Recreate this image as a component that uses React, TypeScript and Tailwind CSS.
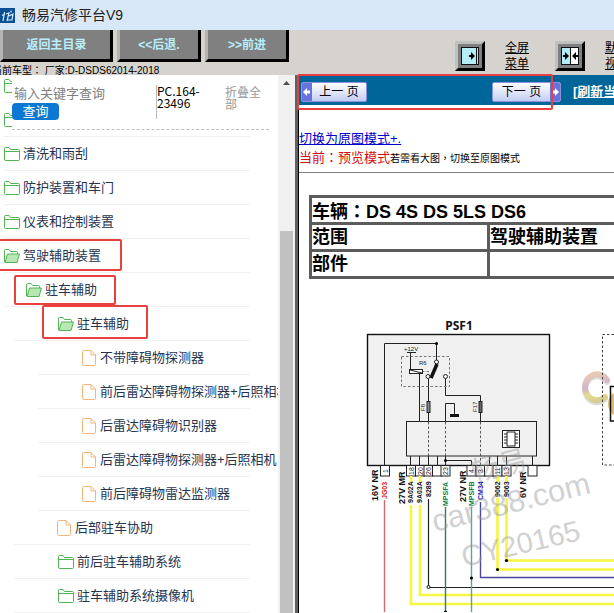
import React from "react";

const CJK = "font-['Liberation_Sans','Noto_Sans_CJK_SC',sans-serif]";

type Kind = "folder" | "open" | "doc";
type Node = { label?: string; kind: Kind; row: string; pad: string; box?: string };

const nodes: Node[] = [
  { kind: "folder", row: "ml-1", pad: "" },
  { kind: "folder", row: "ml-1", pad: "" },
  { label: "清洗和雨刮", kind: "folder", row: "ml-1", pad: "" },
  { label: "防护装置和车门", kind: "folder", row: "ml-1", pad: "" },
  { label: "仪表和控制装置", kind: "folder", row: "ml-1", pad: "" },
  { label: "驾驶辅助装置", kind: "open", row: "ml-1", pad: "", box: "-left-1.5 w-31 top-0 h-8" },
  { label: "驻车辅助", kind: "open", row: "ml-1", pad: "pl-[22px]", box: "left-2.5 w-[102px] top-0.5 h-[30px]" },
  { label: "驻车辅助", kind: "open", row: "ml-3.5", pad: "pl-11", box: "left-7 w-[106px] -top-0.5 h-[34px]" },
  { label: "不带障碍物探测器", kind: "doc", row: "ml-[38px]", pad: "pl-11" },
  { label: "前后雷达障碍物探测器+后照相机", kind: "doc", row: "ml-[38px]", pad: "pl-11" },
  { label: "后雷达障碍物识别器", kind: "doc", row: "ml-[38px]", pad: "pl-11" },
  { label: "后雷达障碍物探测器+后照相机", kind: "doc", row: "ml-[38px]", pad: "pl-11" },
  { label: "前后障碍物雷达监测器", kind: "doc", row: "ml-[38px]", pad: "pl-11" },
  { label: "后部驻车协助", kind: "doc", row: "ml-3.5", pad: "pl-[43px]" },
  { label: "前后驻车辅助系统", kind: "folder", row: "ml-3.5", pad: "pl-11" },
  { label: "驻车辅助系统摄像机", kind: "folder", row: "ml-3.5", pad: "pl-11" },
];

function Icon({ kind }: { kind: Kind }) {
  if (kind === "doc")
    return (
      <svg width="14" height="16" viewBox="0 0 14 16" fill="none" stroke="#f5b47a" className="mr-px shrink-0">
        <path d="M1.5.5H9l4.500 4.500v9.500q0 1-1 1h-11q-1 0-1-1v-13q0-1 1-1ZM9 .5V5h4.500" />
      </svg>
    );
  if (kind === "open")
    return (
      <svg width="16" height="14" viewBox="0 0 16 14" stroke="#52b352" strokeLinejoin="round" className="shrink-0">
        <path d="M.5 13V1.500q0-1 1-1H5l1.500 2h6q1 0 1 1V5" fill="none" />
        <path d="M1 13.500 3.500 5h12l-2.500 8.500Z" fill="#b9e6b5" />
      </svg>
    );
  return (
    <svg width="16" height="14" viewBox="0 0 16 14" fill="none" stroke="#52b352" strokeLinejoin="round" className="shrink-0">
      <path d="M.5 12.500v-11q0-1 1-1H5l1.500 2h8q1 0 1 1v9q0 1-1 1h-13q-1 0-1-1ZM.5 4.500h15" />
    </svg>
  );
}

function Punct({ children }: { children: string }) {
  return <span className="font-['Noto_Sans_CJK_TC',sans-serif]">{children}</span>;
}

const bevel =
  "h-8 border-t-0 border-l-[3px] border-r-[3px] border-b-[3px] border-l-[#b4b4b4] border-r-black border-b-black bg-[#808080] text-xs font-bold text-[#b6eefa]";
const square =
  "flex size-[30px] shrink-0 items-center justify-center border-[3px] border-t-[#c0c0c0] border-l-[#c0c0c0] border-r-black border-b-black bg-[#808080]";
const pager =
  "flex h-5 shrink-0 items-center overflow-hidden rounded-xs border border-[#8c92e0] bg-linear-to-b from-white to-[#c5cdf3] text-xs text-black";
const cell = "border-[3px] border-[#5c5c5c] p-0";

function Arrow({ flip }: { flip?: boolean }) {
  return (
    <svg width="10" height="18" viewBox="0 0 10 18" className={flip ? "shrink-0 rotate-180" : "shrink-0"}>
      <rect width="10" height="18" fill="#6874dc" />
      <path d="M1 9 5 5v2.500h3v3H5V13Z" fill="#fff" />
    </svg>
  );
}

type Label = [number, number, string, number, string];
const labels: Label[] = [
  [378, 502, "16V NR", 9, "#111"],
  [387, 500, "JG03", 7, "#d22"],
  [405, 505, "27V MR", 9, "#111"],
  [413, 504, "9A02A", 7, "#111"],
  [422, 504, "9A03A", 7, "#111"],
  [431, 498, "8289", 7, "#111"],
  [448, 507, "MPSFA", 7, "#08753a"],
  [466, 503, "27V NR", 9, "#111"],
  [474, 507, "MPSFB", 7, "#08753a"],
  [483, 501, "CM34", 7, "#1414b8"],
  [500, 498, "9062", 7, "#111"],
  [509, 498, "9063", 7, "#111"],
  [526, 499, "6V NR", 9, "#111"],
];
const pins: [number, string][] = [
  [385, "1"], [411, "18"], [420, "20"], [428.500, "26"], [437, ""], [445.500, "23"],
  [471.500, "4"], [480.500, "3"], [489, ""], [497.500, "11"], [506.500, "13"], [532.500, ""],
];

function Diagram() {
  return (
    <svg viewBox="299 280 315 333" width="315" height="333" className="block" fontFamily="'Liberation Sans', sans-serif">
      <rect x="367.500" y="335.500" width="182" height="131" fill="#f0f0f0" stroke="#111" strokeWidth="1.400" />
      <text x="459" y="331" fontSize="12" fontWeight="700" textAnchor="middle" fontFamily="'Noto Sans', sans-serif" fill="#111">PSF1</text>
      <g fill="none" stroke="#222">
        <path d="M384.500 466V344.500H436.500V361M407 353.500h9M410.500 353.500V370M419.500 375V422M428.500 380V422M445.500 380V396.500H480.500V422M445.500 422V404.500H454.500V415" />
        <path d="M401.500 357.500H449.500V387.500H401.500ZM422 372.500H431" strokeDasharray="2.500 2" stroke="#777" />
        <rect x="409.500" y="370.500" width="13" height="4" fill="#fff" />
        <path d="M410 371 422 374" />
        <circle cx="436.500" cy="363" r="2" fill="#fff" />
        <circle cx="428" cy="377.500" r="2" fill="#fff" />
        <circle cx="445.500" cy="377.500" r="2" fill="#fff" />
        <path d="M437 365 431 379" strokeWidth="3.500" stroke="#111" />
        <rect x="427" y="402.500" width="3" height="11" fill="#888" />
        <rect x="479" y="402.500" width="3" height="11" fill="#666" />
        <rect x="406.500" y="422.500" width="130" height="34.500" />
        <path d="M428.500 423V457M445.500 423V457M480.500 423V466" strokeDasharray="2.500 2" stroke="#555" />
        <path d="M410.500 457v9M419.500 457v9M428.500 457v9M437.500 457v9M445.500 457v9M489.500 457v9M497.500 457v9M506.500 457v9M532.500 457v9M445.500 461.500H471.500V466" />
        <rect x="502.500" y="431.500" width="17" height="17" fill="#fff" />
        <rect x="507" y="433" width="8" height="14" />
        <path d="M504 435h3M504 438h3M504 441h3M504 444h3M515 435h3M515 438h3M515 441h3M515 444h3" />
      </g>
      <path d="M450 415h9v3h-9Z" fill="#111" />
      <circle cx="436.500" cy="344.500" r="1.500" />
      <circle cx="445.500" cy="461.500" r="1.500" />
      <text x="404" y="352" fontSize="6" fill="#222">+12V</text>
      <text x="419" y="366" fontSize="6" fill="#222">R6</text>
      <text transform="translate(425 412) rotate(-90)" fontSize="6" fill="#222">F8</text>
      <text transform="translate(477 413) rotate(-90)" fontSize="6" fill="#222">F17</text>
      {pins.map(([x, t]) => (
        <g key={x}>
          <rect x={x - 4.5} y="466.500" width="9" height="10.500" fill="#fff" stroke="#222" />
          <text transform={`translate(${x + 2.5} 472) rotate(-90)`} fontSize="7" textAnchor="middle" fill="#222">{t}</text>
        </g>
      ))}
      <g fill="none" strokeWidth="2.600" stroke="#f5f542">
        <path d="M411 477v6M420 477v6M497.500 477v6M506.500 477v6M411 506V605H614M420 506V596H614M497.500 499V570.500H614M506.500 499V561.500H614" />
      </g>
      <g fill="none">
        <path d="M384.500 501V613" stroke="#d46a6a" strokeWidth="1.400" />
        <path d="M428.500 500V588.500H614" stroke="#222" strokeWidth="1.200" />
        <path d="M445.500 508V613" stroke="#357a5c" strokeWidth="1.400" />
        <path d="M471.500 508V613" stroke="#5fa58c" strokeWidth="1.400" />
        <path d="M480.500 503V578.500H614" stroke="#4a489c" strokeWidth="1.400" />
      </g>
      <circle cx="428.500" cy="588" r="1.500" fill="#fff" stroke="#111" />
      <circle cx="471.500" cy="579" r="1.600" />
      <circle cx="497.500" cy="570.500" r="1.600" />
      <circle cx="506.500" cy="561.500" r="1.600" />
      <circle cx="445.500" cy="613" r="1.600" />
      {labels.map(([x, y, t, s, c]) => (
        <text key={t + x} transform={`translate(${x} ${y}) rotate(-90)`} fontSize={s} fontWeight="700" fill={c}>{t}</text>
      ))}
      <defs>
        <linearGradient id="ring" x1="0.300" y1="0" x2="0.500" y2="1">
          <stop offset="0" stopColor="#e9c9b4" />
          <stop offset="0.500" stopColor="#d0b4cc" />
          <stop offset="0.750" stopColor="#e6dc8e" />
          <stop offset="1" stopColor="#d8ce90" />
        </linearGradient>
      </defs>
      <g fill="none" strokeWidth="6" strokeLinecap="round">
        <path d="M607 381a12 13 0 1 0-2 17" stroke="#ddd" transform="translate(0 2)" />
        <path d="M607 381a12 13 0 1 0-2 17" stroke="url(#ring)" />
        <circle cx="622" cy="405" r="11" stroke="#d8bd7a" />
      </g>
      <path d="M614 335.500H602.500V466H614" fill="none" stroke="#444" strokeDasharray="2.500 2" />
      <path d="M614 387.500H610.500V422H614" fill="none" stroke="#111" strokeWidth="1.500" />
      <g fill="#9a9a9a" opacity="0.450">
        <text transform="translate(474 483) rotate(-14)" fontSize="28" fontFamily="'Noto Sans CJK SC', sans-serif">畅易</text>
        <text transform="translate(435 533) rotate(-14)" fontSize="31">car388.com</text>
        <text transform="translate(464 568) rotate(-13)" fontSize="29">CY20165</text>
      </g>
    </svg>
  );
}

export default function App() {
  return (
    <div className={`flex h-screen flex-col overflow-hidden bg-white text-black ${CJK}`}>
      <header className="flex h-[30px] shrink-0 items-center gap-[7px] bg-[#d9e8f9]">
        <svg width="15" height="15" viewBox="0 0 15 15">
          <rect width="15" height="15" fill="#0b4f94" />
          <path d="M2 7.500 5 6M4.500 4 3 13M6 6l3-1-2 8M9 8l4-2-1 6H8" stroke="#d8efff" strokeWidth="1.200" fill="none" />
          <circle cx="11" cy="3.500" r="1" fill="#9cd4ff" />
        </svg>
        <h1 className="text-sm text-[#222]">畅易汽修平台V9</h1>
      </header>

      <div className="flex h-[45px] shrink-0 overflow-hidden bg-[#d6d3ce]">
        <div className="w-[289px] shrink-0">
          <div className="flex gap-1">
            <button className={`${bevel} w-[113px]`}>返回主目录</button>
            <button className={`${bevel} w-[84px]`}>&lt;&lt;后退.</button>
            <button className={`${bevel} w-[84px]`}>&gt;&gt;前进</button>
          </div>
          <p className="-ml-2 whitespace-nowrap text-[10px] leading-4">当前车型<Punct>：</Punct> 厂家:D-DSDS62014-2018</p>
        </div>
        <div className="ml-[166px] flex items-center gap-5 pt-1.5 text-xs leading-4">
          <button className={square} aria-label="全屏">
            <svg width="18" height="18" viewBox="0 0 18 18">
              <rect x=".5" y=".5" width="17" height="17" fill="#b5ecfa" stroke="#111" />
              <path d="M15.500 1v16" stroke="#111" />
              <path d="M8 8h2V5l4 4-4 4v-3H8Z" />
            </svg>
          </button>
          <a href="#full" className="w-[30px] shrink-0 underline">全屏<br />菜单</a>
          <button className={square} aria-label="默认">
            <svg width="18" height="18" viewBox="0 0 18 18">
              <rect x=".5" y=".5" width="17" height="17" fill="#fff" stroke="#111" />
              <path d="M1 1h8v16H1Z" fill="#b5ecfa" />
              <path d="M9.500 1v16" stroke="#111" />
              <path d="M2 8h2V5l4 4-4 4v-3H2ZM17 8h-2V5l-4 4 4 4v-3h2Z" />
            </svg>
          </button>
          <a href="#default" className="w-[30px] shrink-0 underline">默认<br />视图</a>
        </div>
      </div>

      <div className="flex min-h-0 flex-1">
        <aside className="relative w-[278px] shrink-0 overflow-hidden">
          <ul className="-mt-1.5 text-[13px] text-[#26344f]">
            {nodes.map((n, i) => (
              <li key={i} className={`relative mr-7 flex h-[34px] items-center gap-[3px] whitespace-nowrap border-b border-[#f0f0f0] ${n.row} ${n.pad}`}>
                <Icon kind={n.kind} />
                {n.label && <span>{n.label}</span>}
                {n.box && <span className={`absolute rounded-xs border-2 border-[#e8403f] ${n.box}`} />}
              </li>
            ))}
          </ul>
          <form className="absolute top-0 right-[9px] left-3 flex h-[55px] items-start border-b border-dashed border-[#c0c0c0] bg-white">
            <div className="w-36 pt-2">
              <input aria-label="关键字" placeholder="输入关键字查询" className="block h-5 w-full pl-0.5 text-[13px] outline-none placeholder:text-[#808080]" />
              <button type="button" className="block h-[17px] w-[47px] rounded bg-[#0b78d1] text-[13px] leading-4 text-white">查询</button>
            </div>
            <p className="mt-2.5 h-[34px] w-[69px] border-l border-[#bbb] font-['Noto_Sans_CJK_SC',sans-serif] text-xs leading-3">PC.164-<br />23496</p>
            <a href="#fold" className="mt-3 w-10 text-xs leading-3 text-[#999]">折叠全部</a>
          </form>
        </aside>

        <div className="flex w-[17px] shrink-0 flex-col items-center bg-[#f1f1f1] pt-1.5">
          <svg width="7" height="4" viewBox="0 0 7 4"><path d="M0 4 3.500 0 7 4Z" fill="#505050" /></svg>
          <div className="mt-[146px] w-[13px] flex-1 bg-[#c1c1c1]" />
        </div>
        <div className="w-1 shrink-0 border-r border-black bg-[#606060]" />

        <main className="relative min-w-0 flex-1">
          <div className="overflow-hidden">
            <nav className="flex h-[30px] items-center gap-3 bg-[#006699] pt-1 pl-0.5">
              <button className={`${pager} w-[66px]`}>
                <Arrow />
                <span className="flex-1">上一 页</span>
              </button>
              <button className={`${pager} ml-[113px] w-[69px]`}>
                <span className="flex-1">下一 页</span>
                <Arrow flip />
              </button>
              <a href="#refresh" className="shrink-0 text-[13px] font-bold text-white underline">[刷新当前页]</a>
            </nav>
            <div className="border-b border-[#808080] pt-[25px] pb-1.5 text-[13px] leading-[18px]">
              <a href="#origin" className="block h-[18px] text-[#0000c8] underline">切换为原图模式+.</a>
              <p className="h-[18px] whitespace-nowrap text-[#d01010]">
                当前<Punct>：</Punct>预览模式<small className="text-[10px] text-black">若需看大图<Punct>，</Punct>切换至原图模式</small>
              </p>
            </div>
            <table className="mt-[22px] ml-2.5 w-[120%] table-fixed border-collapse text-left text-lg leading-6 font-bold">
              <colgroup>
                <col className="w-[178px]" />
                <col />
              </colgroup>
              <tbody>
                <tr><td colSpan={2} className={cell}><div className="h-6">车辆<Punct>：</Punct>DS 4S DS 5LS DS6</div></td></tr>
                <tr><td className={cell}><div className="h-6">范围</div></td><td className={cell}><div className="h-6">驾驶辅助装置</div></td></tr>
                <tr><td className={cell}><div className="h-6">部件</div></td><td className={cell} /></tr>
              </tbody>
            </table>
            <Diagram />
          </div>
          <div className="pointer-events-none absolute -top-px -left-0.5 h-9 w-64 rounded-xs border-2 border-[#e8403f]" />
        </main>
      </div>
    </div>
  );
}
